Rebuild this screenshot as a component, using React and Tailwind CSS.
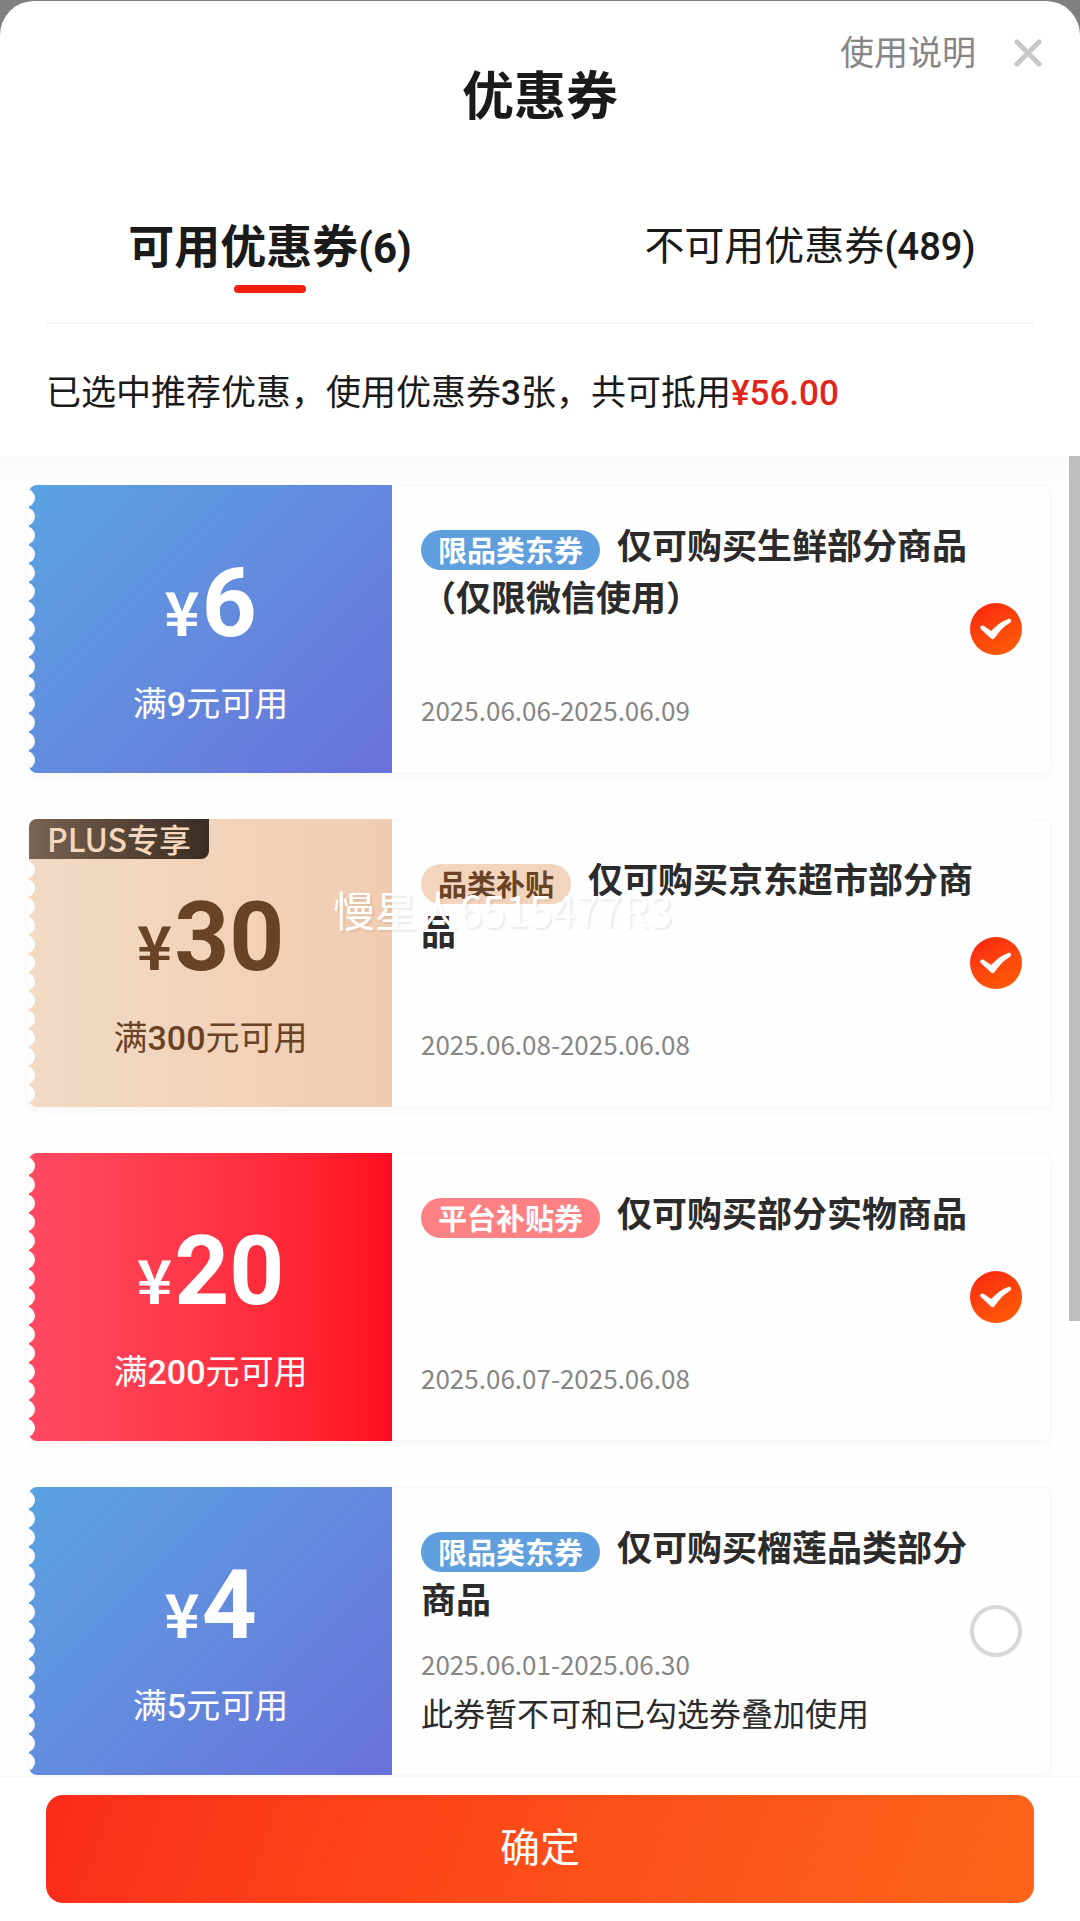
import { useState } from "react";

const COUPONS = [
  {
    id: "fresh",
    theme: "blue",
    amount: 6,
    threshold: 9,
    tag: "限品类东券",
    title: "仅可购买生鲜部分商品（仅限微信使用）",
    date: "2025.06.06-2025.06.09",
    selected: true,
  },
  {
    id: "market",
    theme: "plus",
    amount: 30,
    threshold: 300,
    tag: "品类补贴",
    title: "仅可购买京东超市部分商品",
    date: "2025.06.08-2025.06.08",
    selected: true,
    corner: "PLUS专享",
    watermark: "慢星人6515477R3",
  },
  {
    id: "platform",
    theme: "red",
    amount: 20,
    threshold: 200,
    tag: "平台补贴券",
    title: "仅可购买部分实物商品",
    date: "2025.06.07-2025.06.08",
    selected: true,
  },
  {
    id: "durian",
    theme: "blue",
    amount: 4,
    threshold: 5,
    tag: "限品类东券",
    title: "仅可购买榴莲品类部分商品",
    date: "2025.06.01-2025.06.30",
    selected: false,
    note: "此券暂不可和已勾选券叠加使用",
  },
];

const THEMES = {
  blue: {
    panel: "bg-linear-135 from-[#5aa3e2] to-[#6871d9] text-white",
    tag: "bg-[#5f9fde] text-white",
  },
  plus: {
    panel: "bg-linear-to-r from-[#f2dac4] to-[#f1ccb1] text-[#694326]",
    tag: "bg-[#f3d5bd] text-[#694326]",
  },
  red: {
    panel: "bg-linear-to-r from-[#ff4a61] to-[#ff0a1f] text-white",
    tag: "bg-[#fb8183] text-white",
  },
};

const NOTCHES = Array.from({ length: 15 }, (_, i) => 13 + i * 18.72);

function TicketEdge() {
  return (
    <svg className="absolute inset-y-0 left-0 h-full w-2" viewBox="0 0 8 288" preserveAspectRatio="none" aria-hidden="true">
      {NOTCHES.map((y) => (
        <circle key={y} cx="-3" cy={y} r="9" fill="#fefefe" />
      ))}
    </svg>
  );
}

function CouponCheck({ checked, onChange, label }) {
  return (
    <label className="relative -ml-2 block size-[52px] flex-none self-center">
      <input
        type="checkbox"
        checked={checked}
        onChange={onChange}
        aria-label={label}
        className="block size-full appearance-none rounded-full border-4 border-[#d8d8d8] bg-white checked:border-0 checked:bg-linear-150 checked:from-[#fb1c10] checked:to-[#ff5f06]"
      />
      {checked && (
        <svg className="pointer-events-none absolute inset-0 size-full" viewBox="0 0 52 52" fill="none" aria-hidden="true">
          <path
            d="M10.4 23.6c1.2-1.4 2.8-1.2 4.2-.2l6.6 4.6c5-5.4 10.4-9.8 17.2-12 2.6-.8 3.8 2.4 1.6 3.8-6.4 3.6-10.8 8.6-15 14.8-1.4 2-3.4 2-4.8.2l-9.2-8.6c-.9-.8-1.2-1.7-.6-2.6z"
            fill="#fff"
          />
        </svg>
      )}
    </label>
  );
}

function CouponCard({ coupon, checked, onToggle }) {
  const theme = THEMES[coupon.theme];

  return (
    <li className="relative flex min-h-[288px] rounded-lg bg-[#fefefe] shadow-[0_4px_12px_rgba(0,0,0,0.03)]">
      <div className={`relative flex w-[363px] flex-none flex-col items-center overflow-hidden rounded-l-lg pt-[58px] ${theme.panel}`}>
        <TicketEdge />
        <p className="flex items-baseline gap-0.5 leading-[120px] font-bold">
          <span className="text-[60px]">¥</span>
          <span className="font-['Roboto',sans-serif] text-[96px]">{coupon.amount}</span>
        </p>
        <p className="mt-2 text-[34px] leading-[48px]">
          满<span className="font-['Roboto',sans-serif] font-medium">{coupon.threshold}</span>元可用
        </p>
      </div>

      <div className="flex flex-1 rounded-r-lg border border-l-0 border-[#f7f7f7] pr-7 pl-[29px]">
        <div className="flex flex-1 flex-col justify-between pt-8 pb-[38px]">
          <h2 className="text-[35px] leading-[51px] font-bold text-[#2b2b2b]">
            <span className={`mr-[17px] inline-block h-10 rounded-full px-[17px] align-[-3px] text-[29px] leading-[38px] ${theme.tag}`}>
              {coupon.tag}
            </span>
            {coupon.title}
          </h2>
          <div className="leading-[48px]">
            <p className="text-[26px] text-[#868686]">{coupon.date}</p>
            {coupon.note && <p className="text-[32px] text-[#2b2b2b]">{coupon.note}</p>}
          </div>
        </div>
        <CouponCheck checked={checked} onChange={onToggle} label={coupon.title} />
      </div>

      {coupon.corner && (
        <span className="absolute top-0 left-0 h-10 w-[180px] rounded-tl-lg rounded-br-lg bg-linear-to-r from-[#7a6452] to-[#3a2c22] text-center text-[32px] leading-[38px] font-medium text-[#f6d6bc]">
          {coupon.corner}
        </span>
      )}
      {coupon.watermark && (
        <span className="pointer-events-none absolute top-16 left-[304px] text-[42px] leading-[52px] whitespace-nowrap text-white [text-shadow:2px_2px_2px_rgba(0,0,0,0.08)]">
          {coupon.watermark}
        </span>
      )}
    </li>
  );
}

function SheetHeader() {
  return (
    <header className="grid grid-cols-[1fr_auto_1fr] items-start px-[38px] pt-6">
      <h1 className="col-start-2 mt-[30px] text-[52px] leading-[76px] font-bold text-[#1a1a1a]">优惠券</h1>
      <div className="flex items-center justify-end gap-[38px]">
        <a href="#help" className="text-[34px] leading-[52px] text-[#868686]">
          使用说明
        </a>
        <button type="button" aria-label="关闭" className="pt-1">
          <svg className="block size-7" viewBox="0 0 28 28" fill="none" stroke="#c8c8c8" strokeWidth="5" strokeLinecap="round">
            <path d="M3 3l22 22M25 3L3 25" />
          </svg>
        </button>
      </div>
    </header>
  );
}

function CouponTabs({ active, onChange }) {
  const tabs = [
    { id: "usable", label: "可用优惠券", count: 6 },
    { id: "unusable", label: "不可用优惠券", count: 489 },
  ];

  return (
    <div role="tablist" className="mt-[76px] grid grid-cols-2">
      {tabs.map((tab) => {
        const selected = tab.id === active;
        return (
          <button
            key={tab.id}
            type="button"
            role="tab"
            aria-selected={selected}
            onClick={() => onChange(tab.id)}
            className="flex flex-col items-center pb-[29px] leading-[72px] text-[#1a1a1a]"
          >
            <span className={selected ? "text-[46px] font-bold" : "text-[40px]"}>
              {tab.label}
              <span className={selected ? "font-['Roboto',sans-serif] text-[42px]" : "font-['Roboto',sans-serif] text-[38px] font-medium"}>
                ({tab.count})
              </span>
            </span>
            {selected && <span className="h-2 w-[72px] rounded-full bg-[#f0200f]" />}
          </button>
        );
      })}
    </div>
  );
}

export default function App() {
  const [tab, setTab] = useState("usable");
  const [picked, setPicked] = useState(COUPONS.filter((c) => c.selected).map((c) => c.id));

  const toggle = (id) =>
    setPicked((ids) => (ids.includes(id) ? ids.filter((item) => item !== id) : [...ids, id]));

  return (
    <div className="flex min-h-screen flex-col bg-[#808080] pt-px font-['Noto_Sans_CJK_SC',sans-serif]">
      <div className="flex flex-1 flex-col rounded-t-[34px] bg-white">
        <SheetHeader />
        <CouponTabs active={tab} onChange={setTab} />
        <p className="mx-[46px] border-t-2 border-[#f4f4f4] pt-10 pb-9 text-[35px] leading-[52px] text-[#1a1a1a]">
          已选中推荐优惠，使用优惠券<span className="font-['Roboto',sans-serif] font-medium">3</span>张，共可抵用
          <span className="font-['Roboto',sans-serif] font-medium text-[#e1251b]">¥56.00</span>
        </p>

        <main className="relative flex-1 bg-linear-to-b from-[#f9f9f9] to-[#fefefe] to-[30px] px-[29px] pt-[29px]">
          <ul className="flex flex-col gap-[46px]">
            {COUPONS.map((coupon) => (
              <CouponCard
                key={coupon.id}
                coupon={coupon}
                checked={picked.includes(coupon.id)}
                onToggle={() => toggle(coupon.id)}
              />
            ))}
          </ul>
          <div className="absolute top-0 right-0 h-[65.5%] w-[11px] bg-[#bebebe]" aria-hidden="true" />
        </main>

        <footer className="relative border-t-2 border-[#f7f7f7] bg-white px-[46px] pt-[17px] pb-[18px]">
          <button
            type="button"
            className="block h-[108px] w-full rounded-[17px] bg-linear-110 from-[#fb2b19] to-[#fc6519] pb-2 text-[40px] leading-[98px] text-white"
          >
            确定
          </button>
        </footer>
      </div>
    </div>
  );
}
